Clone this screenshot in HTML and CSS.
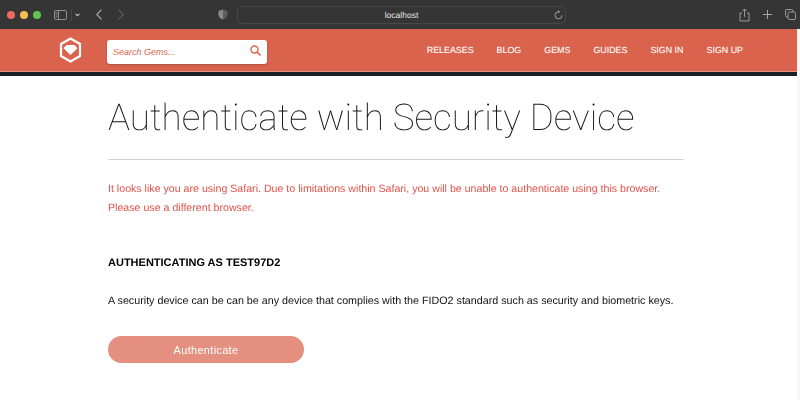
FILE: index.html
```html
<!DOCTYPE html>
<html lang="en">
<head>
<meta charset="utf-8">
<title>Authenticate with Security Device</title>
<link rel="stylesheet" href="styles.css">
</head>
<body>
<div class="browser-bar">
  <div class="lights"><span class="light red"></span><span class="light yellow"></span><span class="light green"></span></div>
  <svg class="sidebar-icon" width="13" height="10" viewBox="0 0 13 10" fill="none"><rect x="0.5" y="0.5" width="12" height="9" rx="1.5" stroke="#8f8f8f"/><path d="M4.500 1v8" stroke="#8f8f8f"/><path d="M1.500 2.800h2M1.500 4.800h2M1.500 6.800h2" stroke="#8f8f8f"/></svg>
  <span class="bar-divider"></span>
  <svg class="caret" width="5" height="4" viewBox="0 0 5 4" fill="none"><path d="M.6.8l1.900 1.900L4.400.8" stroke="#c4c4c4" stroke-width="1.100"/></svg>
  <svg class="back" width="6" height="11" viewBox="0 0 6 11" fill="none"><path d="M5.500 .7L.8 5.500l4.700 4.800" stroke="#a8a8a8" stroke-width="1.200"/></svg>
  <svg class="forward" width="6" height="11" viewBox="0 0 6 11" fill="none"><path d="M.5 .7l4.700 4.800-4.700 4.800" stroke="#5f5f5f" stroke-width="1.200"/></svg>
  <svg class="shield" width="10" height="11" viewBox="0 0 10 11"><path d="M5 .5L9.500 2v3.500c0 2.400-2 4-4.500 5C2.500 9.500.5 7.900.5 5.500V2z" fill="#5c5c5c"/><path d="M5 .5V10.500C2.500 9.500.5 7.900.5 5.500V2z" fill="#8a8a8a"/></svg>
  <div class="address"><span class="url">localhost</span>
    <svg class="reload" width="9" height="10" viewBox="0 0 9 10" fill="none"><path d="M4.500 1.800a3.500 3.500 0 1 0 3.500 3.500" stroke="#a8a8a8" stroke-width=".9"/><path d="M4.200.2l2 1.600-2 1.500z" fill="#a8a8a8"/></svg>
  </div>
  <div class="bar-actions">
    <svg width="11" height="14" viewBox="0 0 11 14" fill="none"><path d="M3 5H1v8h9V5H8" stroke="#9a9a9a"/><path d="M5.500 9V1M3.500 3l2-2 2 2" stroke="#9a9a9a"/></svg>
    <svg width="9" height="9" viewBox="0 0 9 9" fill="none"><path d="M4.500 0v9M0 4.500h9" stroke="#a8a8a8"/></svg>
    <svg width="11" height="11" viewBox="0 0 11 11" fill="none"><rect x=".5" y=".5" width="7.500" height="7.500" rx="1.500" stroke="#9a9a9a"/><rect x="3" y="3" width="7.500" height="7.500" rx="1.500" fill="#353535" stroke="#9a9a9a"/></svg>
  </div>
</div>
<div class="page">
  <div class="page-main">
    <header class="site-header">
      <svg class="logo" width="23" height="26" viewBox="0 0 23 26" fill="none"><path d="M11.500 1.500l9.500 5.500v12l-9.500 5.500L2 19V7z" stroke="#fff" stroke-width="2.200"/><path d="M7.500 8h8l3 3.300-7 6.700-7-6.700z" fill="#fff"/></svg>
      <form class="search">
        <span class="search-text">Search Gems...</span>
        <svg width="11" height="11" viewBox="0 0 11 11" fill="none"><circle cx="4.500" cy="4.500" r="3.500" stroke="#d9634c" stroke-width="1.400"/><path d="M7 7l3.500 3.500" stroke="#d9634c" stroke-width="1.600"/></svg>
      </form>
      <nav class="nav">
        <a>RELEASES</a><a>BLOG</a><a>GEMS</a><a>GUIDES</a><a>SIGN IN</a><a>SIGN UP</a>
      </nav>
    </header>
    <main class="content">
      <h1 class="title">Authenticate with Security Device</h1>
      <p class="warning">It looks like you are using Safari. Due to limitations within Safari, you will be unable to authenticate using this browser. Please use a different browser.</p>
      <h2 class="subtitle">AUTHENTICATING AS TEST97D2</h2>
      <p class="description">A security device can be can be any device that complies with the FIDO2 standard such as security and biometric keys.</p>
      <button class="auth-button" type="button">Authenticate</button>
    </main>
  </div>
  <div class="scroll-strip"></div>
</div>
</body>
</html>
```

FILE: styles.css
```css
* { box-sizing: border-box; }
html, body { margin: 0; height: 400px; overflow: hidden; background: #fff; }
body { font-family: "Liberation Sans", Arial, sans-serif; text-rendering: geometricPrecision; }

.browser-bar { height: 29px; background: #353535; display: flex; align-items: center; padding-left: 7px; }
.lights { display: flex; gap: 5px; width: 47px; }
.light { width: 8px; height: 8px; border-radius: 50%; }
.red { background: #ec6a5e; }
.yellow { background: #f4bf4f; }
.green { background: #61c554; }
.bar-divider { width: 1px; height: 12px; margin-left: 4px; background: #484848; }
.caret { margin-left: 3px; }
.back { margin-left: 16px; }
.forward { margin-left: 16px; }
.shield { margin-left: 94px; }
.address { width: 329px; height: 18px; margin-left: 9px; border: 1px solid #484848; border-radius: 5px; display: flex; align-items: center; justify-content: center; position: relative; }
.url { color: #e4e4e4; font-size: 8.500px; }
.reload { position: absolute; right: 2px; top: 3px; }
.bar-actions { margin-left: 173px; display: flex; align-items: center; gap: 13px; }

.page { display: flex; height: 371px; }
.page-main { flex: 1; min-width: 0; }
.scroll-strip { width: 3px; background: #f6f6f6; }

.site-header { height: 43px; background: #d9634c; border-bottom: 1px solid #e7937f; box-shadow: 0 4px 0 #1b2029; display: flex; align-items: center; padding: 0 54px 0 59px; }
.logo { margin-right: 25px; }
.search { width: 160px; height: 24px; margin-top: 3px; background: #fff; border-radius: 3px; display: flex; align-items: center; justify-content: space-between; padding: 0 6px 0 6px; box-shadow: 0 1px 2px rgba(0,0,0,.2); }
.search-text { color: #d9634c; font-size: 9px; font-style: italic; }
.search svg { margin-top: -3px; }
.nav { margin-left: auto; display: flex; gap: 23px; }
.nav a { color: #fff; font-size: 8.900px; -webkit-text-stroke: .1px #fff; }

.content { width: 576px; margin-left: 108px; will-change: opacity; }
.title { margin: 0; padding: 24px 0 20px; font-family: Roboto, sans-serif; font-weight: 100; font-size: 36.800px; line-height: 43px; color: #111; border-bottom: 1px solid #d2d2d2; white-space: nowrap; }
.warning { margin: 20px 0 0; color: #e2524a; font-size: 10.640px; line-height: 19px; }
.subtitle { margin: 38px 0 0; font-size: 11px; line-height: 14px; font-weight: 700; color: #000; }
.description { margin: 24px 0 0; font-size: 10.730px; line-height: 14px; color: #111; white-space: nowrap; }
.auth-button { display: block; width: 196px; height: 27px; margin-top: 28px; border: 0; border-radius: 14px; background: #e48f7f; color: #fff; font-family: "Liberation Sans", Arial, sans-serif; font-size: 11px; letter-spacing: .3px; }
```
